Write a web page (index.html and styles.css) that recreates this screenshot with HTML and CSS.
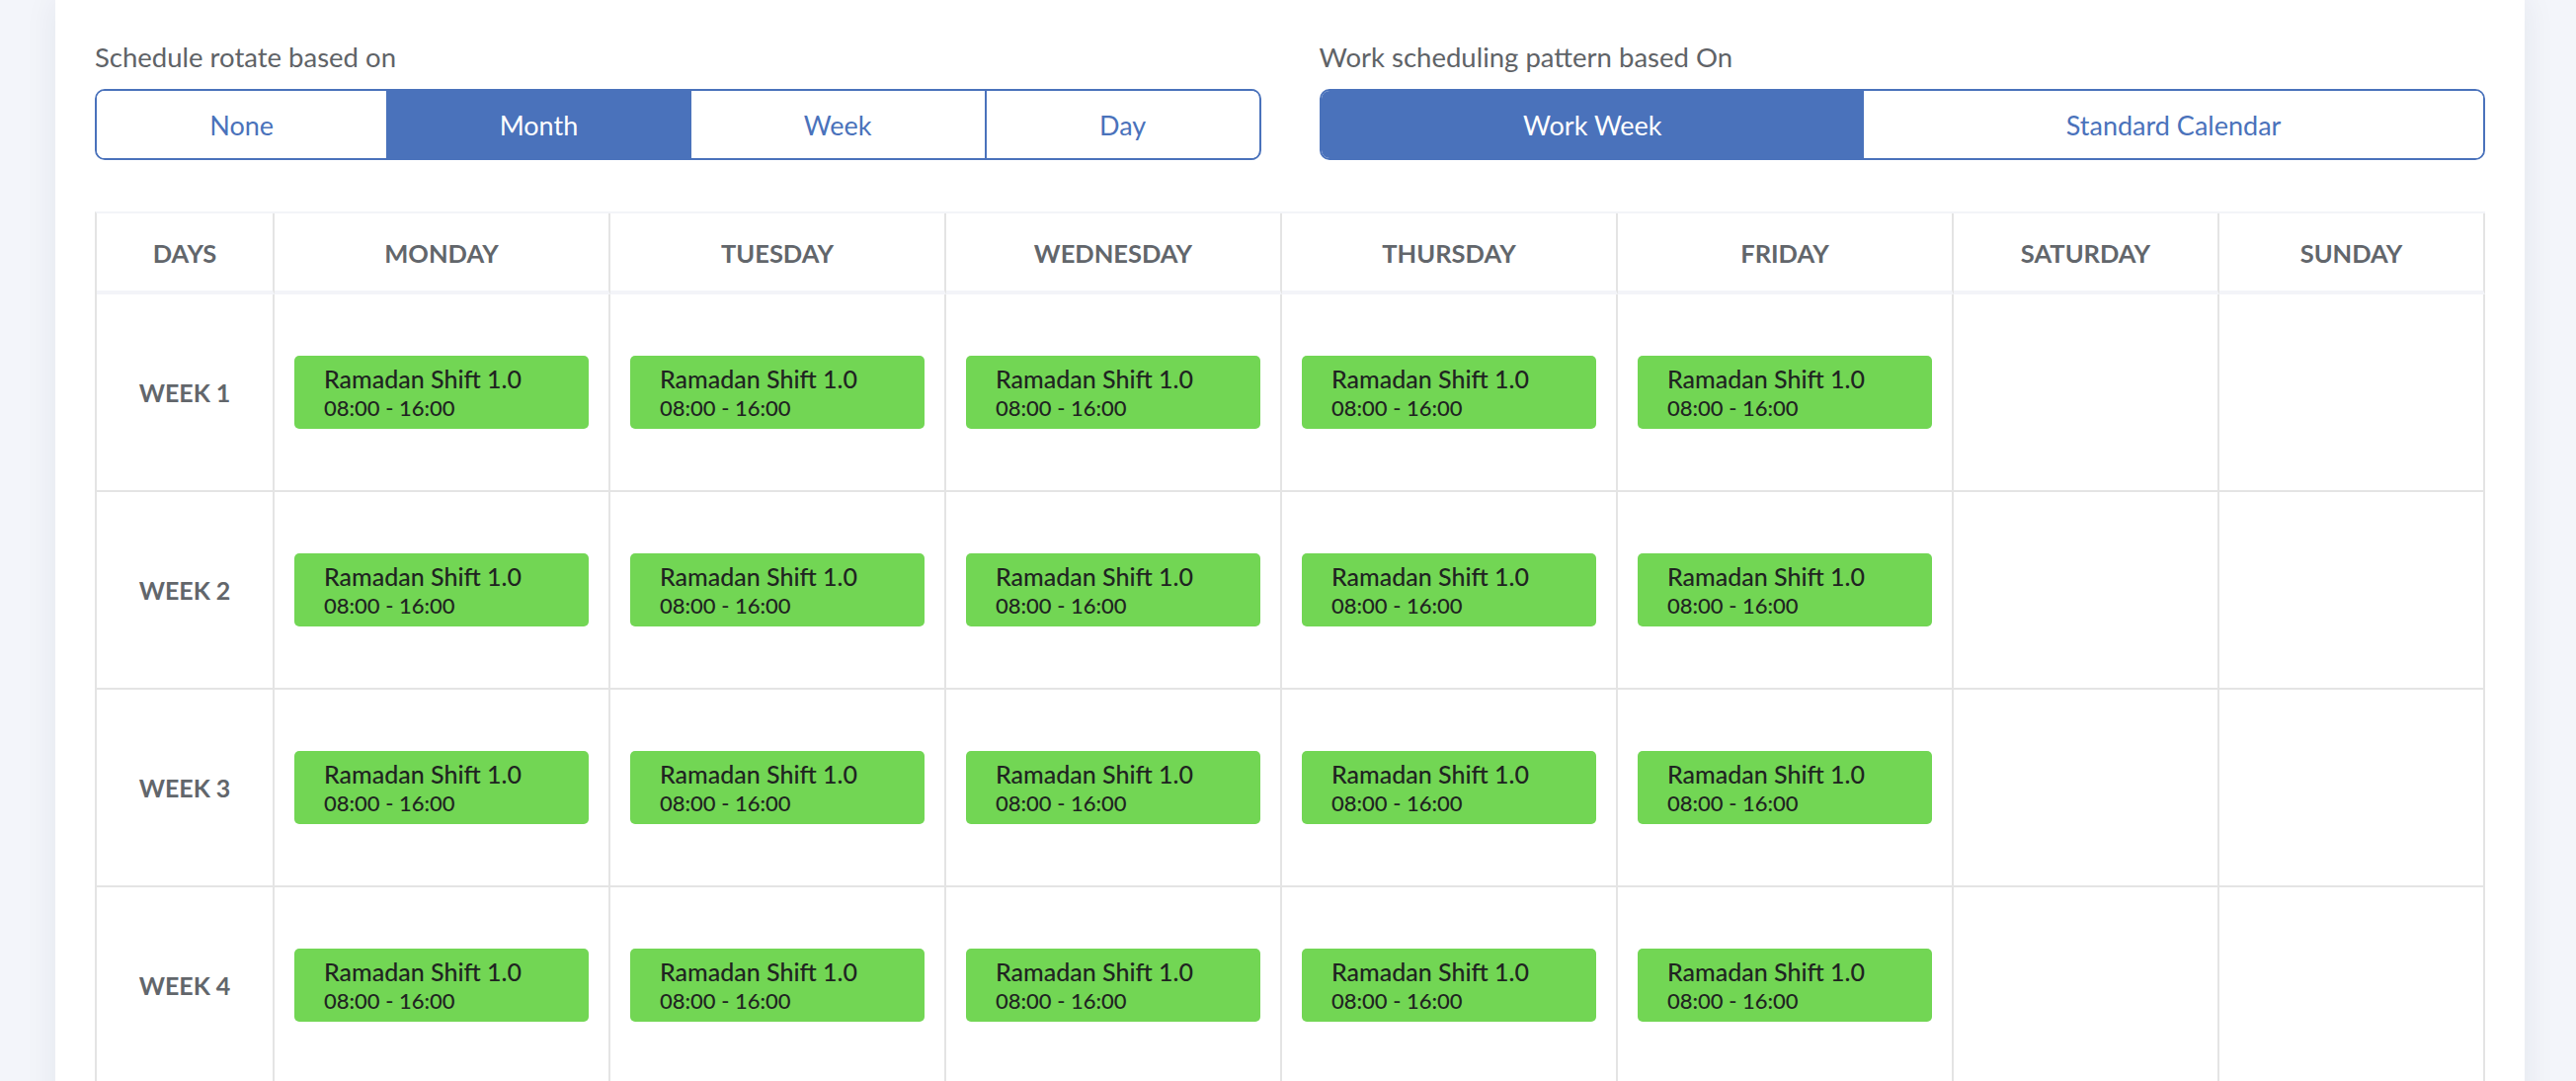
FILE: index.html
```html
<!DOCTYPE html>
<html lang="en">
<head>
<meta charset="utf-8">
<title>Schedule</title>
<link rel="stylesheet" href="styles.css">
</head>
<body>
<div class="page">
  <div class="card">
    <div class="options">
      <div class="option">
        <div class="label">Schedule rotate based on</div>
        <div class="seg">
          <div class="seg-item">None</div>
          <div class="seg-item active">Month</div>
          <div class="seg-item">Week</div>
          <div class="seg-item divided">Day</div>
        </div>
      </div>
      <div class="option">
        <div class="label">Work scheduling pattern based On</div>
        <div class="seg">
          <div class="seg-item active">Work Week</div>
          <div class="seg-item">Standard Calendar</div>
        </div>
      </div>
    </div>

    <div class="grid">
      <div class="hcell">DAYS</div>
      <div class="hcell">MONDAY</div>
      <div class="hcell">TUESDAY</div>
      <div class="hcell">WEDNESDAY</div>
      <div class="hcell">THURSDAY</div>
      <div class="hcell">FRIDAY</div>
      <div class="hcell">SATURDAY</div>
      <div class="hcell">SUNDAY</div>

      <div class="wcell">WEEK 1</div>
      <div class="dcell"><div class="shift"><div class="shift-name">Ramadan Shift 1.0</div><div class="shift-time">08:00 - 16:00</div></div></div>
      <div class="dcell"><div class="shift"><div class="shift-name">Ramadan Shift 1.0</div><div class="shift-time">08:00 - 16:00</div></div></div>
      <div class="dcell"><div class="shift"><div class="shift-name">Ramadan Shift 1.0</div><div class="shift-time">08:00 - 16:00</div></div></div>
      <div class="dcell"><div class="shift"><div class="shift-name">Ramadan Shift 1.0</div><div class="shift-time">08:00 - 16:00</div></div></div>
      <div class="dcell"><div class="shift"><div class="shift-name">Ramadan Shift 1.0</div><div class="shift-time">08:00 - 16:00</div></div></div>
      <div class="dcell"></div>
      <div class="dcell"></div>

      <div class="wcell">WEEK 2</div>
      <div class="dcell"><div class="shift"><div class="shift-name">Ramadan Shift 1.0</div><div class="shift-time">08:00 - 16:00</div></div></div>
      <div class="dcell"><div class="shift"><div class="shift-name">Ramadan Shift 1.0</div><div class="shift-time">08:00 - 16:00</div></div></div>
      <div class="dcell"><div class="shift"><div class="shift-name">Ramadan Shift 1.0</div><div class="shift-time">08:00 - 16:00</div></div></div>
      <div class="dcell"><div class="shift"><div class="shift-name">Ramadan Shift 1.0</div><div class="shift-time">08:00 - 16:00</div></div></div>
      <div class="dcell"><div class="shift"><div class="shift-name">Ramadan Shift 1.0</div><div class="shift-time">08:00 - 16:00</div></div></div>
      <div class="dcell"></div>
      <div class="dcell"></div>

      <div class="wcell">WEEK 3</div>
      <div class="dcell"><div class="shift"><div class="shift-name">Ramadan Shift 1.0</div><div class="shift-time">08:00 - 16:00</div></div></div>
      <div class="dcell"><div class="shift"><div class="shift-name">Ramadan Shift 1.0</div><div class="shift-time">08:00 - 16:00</div></div></div>
      <div class="dcell"><div class="shift"><div class="shift-name">Ramadan Shift 1.0</div><div class="shift-time">08:00 - 16:00</div></div></div>
      <div class="dcell"><div class="shift"><div class="shift-name">Ramadan Shift 1.0</div><div class="shift-time">08:00 - 16:00</div></div></div>
      <div class="dcell"><div class="shift"><div class="shift-name">Ramadan Shift 1.0</div><div class="shift-time">08:00 - 16:00</div></div></div>
      <div class="dcell"></div>
      <div class="dcell"></div>

      <div class="wcell">WEEK 4</div>
      <div class="dcell"><div class="shift"><div class="shift-name">Ramadan Shift 1.0</div><div class="shift-time">08:00 - 16:00</div></div></div>
      <div class="dcell"><div class="shift"><div class="shift-name">Ramadan Shift 1.0</div><div class="shift-time">08:00 - 16:00</div></div></div>
      <div class="dcell"><div class="shift"><div class="shift-name">Ramadan Shift 1.0</div><div class="shift-time">08:00 - 16:00</div></div></div>
      <div class="dcell"><div class="shift"><div class="shift-name">Ramadan Shift 1.0</div><div class="shift-time">08:00 - 16:00</div></div></div>
      <div class="dcell"><div class="shift"><div class="shift-name">Ramadan Shift 1.0</div><div class="shift-time">08:00 - 16:00</div></div></div>
      <div class="dcell"></div>
      <div class="dcell"></div>
    </div>
  </div>
</div>
</body>
</html>
```

FILE: styles.css
```css
html, body {
  margin: 0;
  padding: 0;
  background: #f3f5fa;
  font-family: "Lato", "Liberation Sans", sans-serif;
}

.page {
  height: 1094px;
  overflow: hidden;
}

.card {
  margin-left: 56px;
  width: 2500px;
  box-sizing: border-box;
  background: #ffffff;
  padding: 43px 40px 0 40px;
  min-height: 1200px;
  box-shadow: 0 0 32px rgba(30, 40, 80, 0.07);
}

.options {
  display: grid;
  grid-template-columns: 1fr 1fr;
  column-gap: 59px;
}

.label {
  font-size: 27.5px;
  line-height: 29px;
  color: #5f6367;
  margin-bottom: 18px;
}

.seg {
  display: flex;
  height: 72px;
  box-sizing: border-box;
  border: 2px solid #4a72bb;
  border-radius: 10px;
  overflow: hidden;
}

.seg-item {
  flex: 1 1 auto;
  display: flex;
  align-items: center;
  justify-content: center;
  font-size: 27px;
  color: #4a72bb;
  background: #ffffff;
  white-space: nowrap;
}

.seg-item.active {
  background: #4a72bb;
  color: #ffffff;
}

.seg-item.divided {
  border-left: 2px solid #4a72bb;
}

.grid {
  margin-top: 52px;
  display: grid;
  grid-template-columns: 180px repeat(5, 340px) 1fr 1fr;
  grid-auto-rows: 200px;
  grid-template-rows: 82px;
  border-left: 2px solid #e4e4e4;
  border-top: 2px solid #f3f4f8;
}

.hcell,
.wcell,
.dcell {
  box-sizing: border-box;
  border-right: 2px solid #e4e4e4;
  border-bottom: 2px solid #e4e4e4;
  display: flex;
  align-items: center;
  justify-content: center;
}

.hcell {
  border-bottom: 4px solid #f3f4f8;
  font-size: 25.5px;
  font-weight: 700;
  color: #62666b;
  padding-top: 2px;
}

.wcell {
  font-size: 25px;
  font-weight: 700;
  color: #62666b;
}

.dcell {
  padding: 0 20px;
}

.shift {
  width: 100%;
  height: 74px;
  box-sizing: border-box;
  background: #72d654;
  border-radius: 5px;
  padding: 8px 30px 6px 30px;
  color: #1f2421;
}

.shift-name {
  font-size: 25px;
  font-weight: 500;
  line-height: 30px;
}

.shift-time {
  font-size: 22px;
  font-weight: 500;
  line-height: 30px;
}
```
